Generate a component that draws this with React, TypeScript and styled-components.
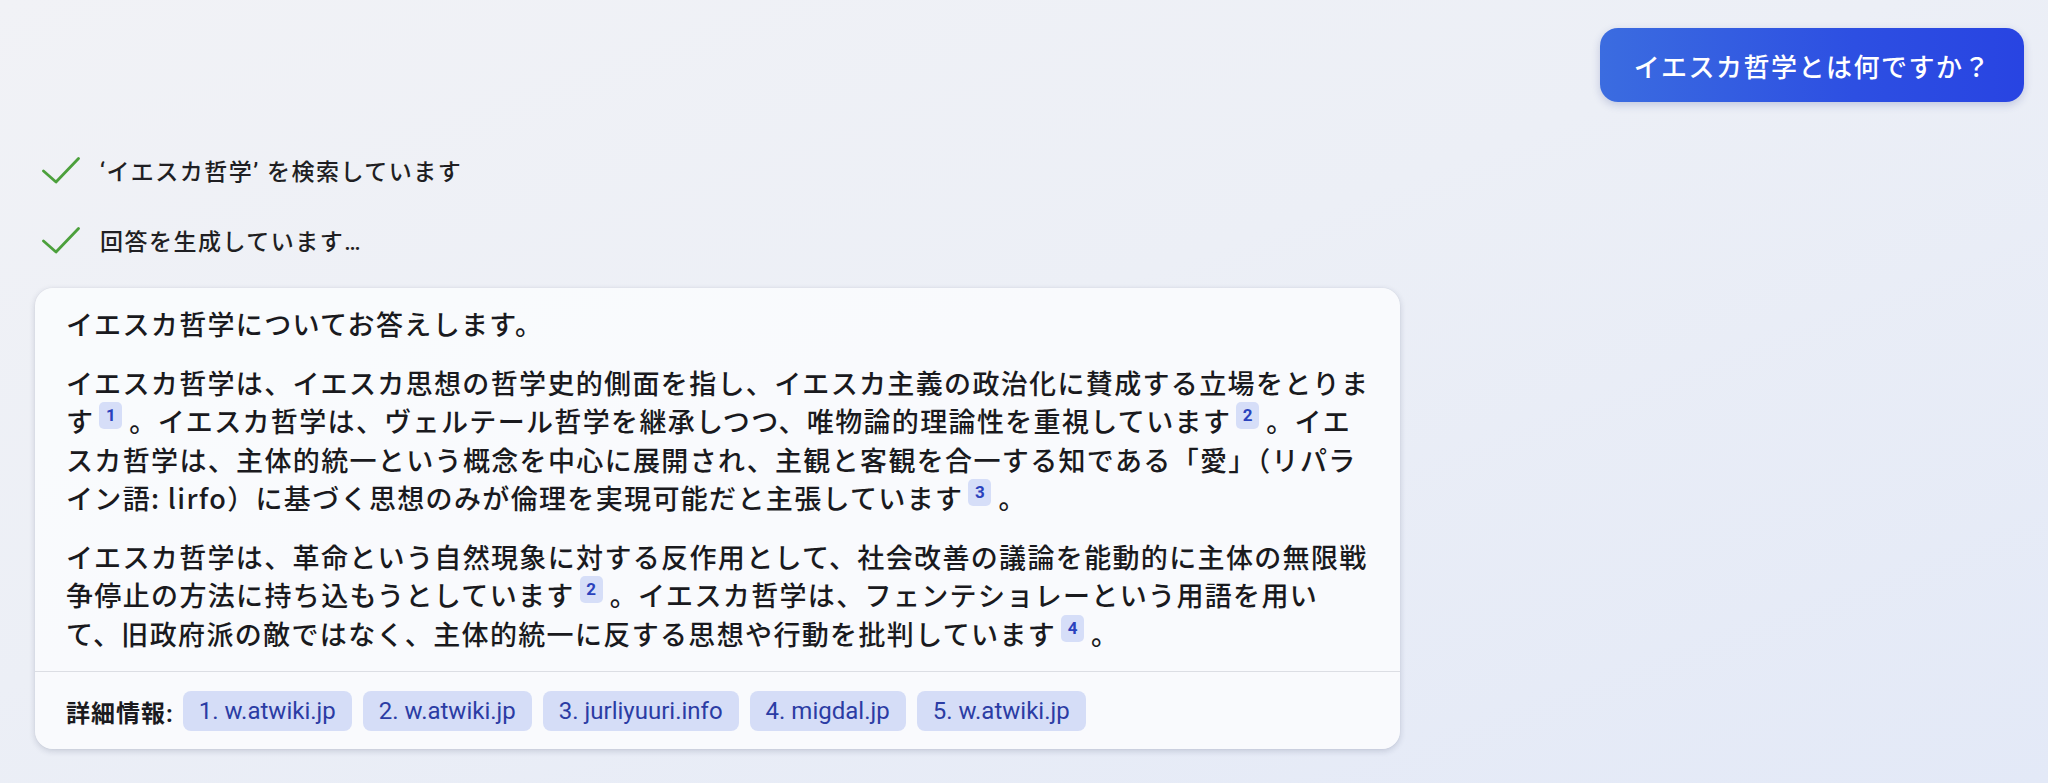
import React from "react";
import styled, { createGlobalStyle } from "styled-components";

const GlobalStyle = createGlobalStyle`
  html, body { margin: 0; padding: 0; }
  body {
    width: 2048px;
    height: 783px;
    overflow: hidden;
    background: linear-gradient(160deg, #f1f2f6 0%, #eceff6 45%, #e3e9f7 100%);
    font-family: Roboto, "Noto Sans CJK JP", sans-serif;
    color: #1b1b1f;
  }
`;

const Page = styled.div`
  box-sizing: border-box;
  width: 2048px;
  height: 783px;
  padding: 28px 24px 0 35px;
  display: flex;
  flex-direction: column;
`;

const BubbleRow = styled.div`
  display: flex;
  justify-content: flex-end;
`;

const Bubble = styled.div`
  height: 74px;
  box-sizing: border-box;
  padding: 0 33px 0 34px;
  display: flex;
  align-items: center;
  border-radius: 18px;
  background: linear-gradient(90deg, #3b6ce0 0%, #2d4fe2 60%, #2844e2 100%);
  color: #ffffff;
  font-size: 26px;
  font-weight: 500;
  letter-spacing: 1.5px;
  box-shadow: 0 3px 8px rgba(40, 60, 140, 0.22);
`;

const StatusList = styled.div`
  display: flex;
  flex-direction: column;
  gap: 30px;
  margin-top: 48px;
  padding-left: 7px;
`;

const StatusRow = styled.div`
  display: flex;
  align-items: center;
  gap: 20px;
  height: 40px;
  font-size: 23px;
  font-weight: 500;
  letter-spacing: 1.5px;
  color: #1f1f23;
`;

const Card = styled.div`
  margin-top: 28px;
  width: 1365px;
  box-sizing: border-box;
  background: rgba(250, 251, 253, 0.94);
  border-radius: 18px;
  box-shadow: 0 2px 6px rgba(30, 40, 80, 0.18), 0 0 1px rgba(0, 0, 0, 0.12);
  overflow: hidden;
`;

const Body = styled.div`
  padding: 17px 27px 18px 31px;
  font-family: "Noto Sans CJK JP", sans-serif;
  font-size: 27px;
  font-weight: 500;
  letter-spacing: 1.35px;
  line-height: 38.5px;
  display: flex;
  flex-direction: column;
  gap: 20px;
  color: #1a1a1e;
`;

const Para = styled.p`
  margin: 0;
`;

const Ref = styled.span`
  display: inline-block;
  vertical-align: top;
  box-sizing: border-box;
  min-width: 23px;
  height: 27px;
  margin: 0 7px 0 5px;
  padding: 0 5px;
  border-radius: 5px;
  background: #d6def8;
  color: #2a42bd;
  font-family: Roboto, sans-serif;
  font-size: 17px;
  font-weight: 700;
  line-height: 27px;
  letter-spacing: 0;
  text-align: center;
`;

const Footer = styled.div`
  border-top: 1px solid #dcdee4;
  padding: 19px 27px 18px 31px;
  display: flex;
  align-items: center;
  gap: 11px;
`;

const Label = styled.span`
  font-size: 24px;
  font-weight: 700;
  letter-spacing: 1px;
  color: #1b1b1f;
  margin-right: -2px;
`;

const Chip = styled.a`
  height: 40px;
  box-sizing: border-box;
  padding: 0 16px;
  border-radius: 8px;
  background: #d5ddf7;
  color: #2b3ca4;
  font-size: 24px;
  display: flex;
  align-items: center;
  text-decoration: none;
`;

const Check = () => (
  <svg width="38" height="27" viewBox="0 0 38 27" aria-hidden="true">
    <polyline
      points="1.5,14 14,25 36.5,1.5"
      fill="none"
      stroke="#4ca03c"
      strokeWidth="2.8"
      strokeLinecap="round"
      strokeLinejoin="round"
    />
  </svg>
);

const sources = [
  "1. w.atwiki.jp",
  "2. w.atwiki.jp",
  "3. jurliyuuri.info",
  "4. migdal.jp",
  "5. w.atwiki.jp",
];

export default function App() {
  return (
    <>
      <GlobalStyle />
      <Page>
        <BubbleRow>
          <Bubble>イエスカ哲学とは何ですか？</Bubble>
        </BubbleRow>
        <StatusList>
          <StatusRow>
            <Check />
            <span>‘イエスカ哲学’ を検索しています</span>
          </StatusRow>
          <StatusRow>
            <Check />
            <span>回答を生成しています…</span>
          </StatusRow>
        </StatusList>
        <Card>
          <Body>
            <Para>イエスカ哲学についてお答えします。</Para>
            <Para>
              イエスカ哲学は、イエスカ思想の哲学史的側面を指し、イエスカ主義の政治化に賛成する立場をとります
              <Ref>1</Ref>
              。イエスカ哲学は、ヴェルテール哲学を継承しつつ、唯物論的理論性を重視しています
              <Ref>2</Ref>
              。イエスカ哲学は、主体的統一という概念を中心に展開され、主観と客観を合一する知である「愛」（リパライン語: lirfo）に基づく思想のみが倫理を実現可能だと主張しています
              <Ref>3</Ref>。
            </Para>
            <Para>
              イエスカ哲学は、革命という自然現象に対する反作用として、社会改善の議論を能動的に主体の無限戦争停止の方法に持ち込もうとしています
              <Ref>2</Ref>
              。イエスカ哲学は、フェンテショレーという用語を用い
              <br />
              て、旧政府派の敵ではなく、主体的統一に反する思想や行動を批判しています
              <Ref>4</Ref>。
            </Para>
          </Body>
          <Footer>
            <Label>詳細情報:</Label>
            {sources.map((s) => (
              <Chip key={s} href="#">
                {s}
              </Chip>
            ))}
          </Footer>
        </Card>
      </Page>
    </>
  );
}
